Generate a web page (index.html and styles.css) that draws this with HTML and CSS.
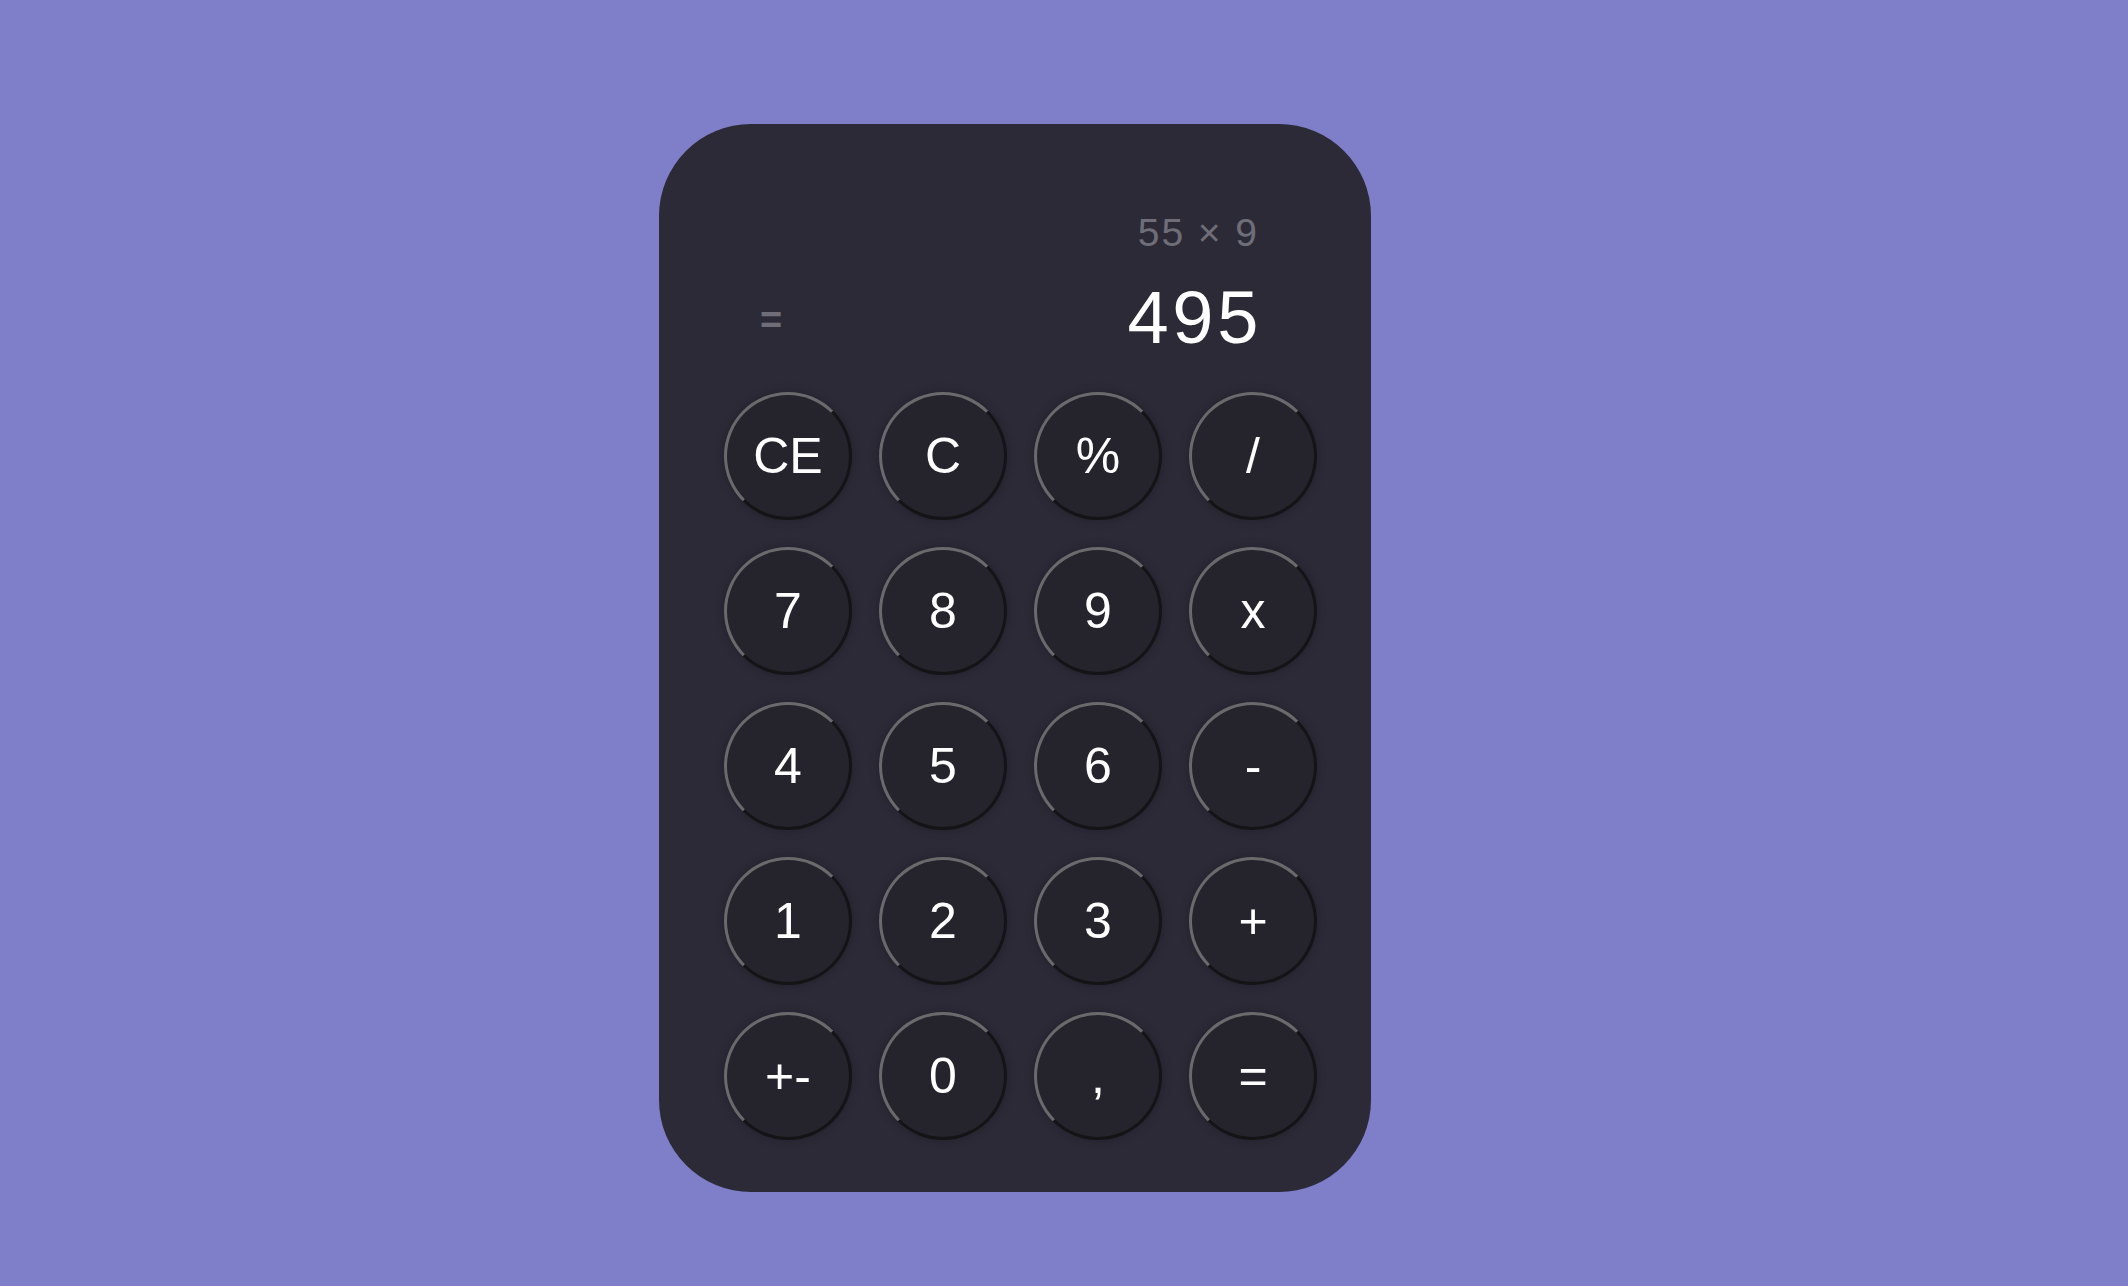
FILE: index.html
```html
<!DOCTYPE html>
<html lang="en">
<head>
<meta charset="utf-8">
<title>Calculator</title>
<link rel="stylesheet" href="styles.css">
</head>
<body>
<div class="calc">
  <div class="display">
    <div class="expr">55 × 9</div>
    <div class="result-row">
      <span class="eq">=</span>
      <span class="result">495</span>
    </div>
  </div>
  <div class="keys">
    <button class="key">CE</button>
    <button class="key">C</button>
    <button class="key">%</button>
    <button class="key">/</button>
    <button class="key">7</button>
    <button class="key">8</button>
    <button class="key">9</button>
    <button class="key">x</button>
    <button class="key">4</button>
    <button class="key">5</button>
    <button class="key">6</button>
    <button class="key">-</button>
    <button class="key">1</button>
    <button class="key">2</button>
    <button class="key">3</button>
    <button class="key">+</button>
    <button class="key">+-</button>
    <button class="key">0</button>
    <button class="key">,</button>
    <button class="key">=</button>
  </div>
</div>
</body>
</html>
```
FILE: styles.css
```css
html, body {
  margin: 0;
  padding: 0;
}
body {
  background: #7f7fc9;
  min-height: 100vh;
  font-family: "Liberation Sans", Arial, sans-serif;
  overflow: hidden;
}
.calc {
  box-sizing: border-box;
  width: 712px;
  height: 1068px;
  margin: 124px 0 0 659px;
  padding: 0 54px 0 65px;
  background: #2c2a37;
  border-radius: 92px;
}
.display {
  height: 268px;
  box-sizing: border-box;
  padding-top: 89px;
}
.expr {
  font-size: 39px;
  line-height: 39px;
  letter-spacing: 0.05em;
  color: #6f6e78;
  text-align: right;
  padding-right: 58px;
}
.result-row {
  margin-top: 29px;
  display: flex;
  justify-content: space-between;
  align-items: center;
  padding: 0 55px 0 36px;
}
.eq {
  font-size: 38px;
  line-height: 38px;
  font-weight: bold;
  color: #6f6e78;
  margin-top: 4px;
}
.result {
  font-size: 74px;
  line-height: 74px;
  letter-spacing: 0.05em;
  color: #ffffff;
}
.keys {
  display: grid;
  grid-template-columns: repeat(4, 128px);
  grid-auto-rows: 128px;
  gap: 27px;
}
.key {
  box-sizing: border-box;
  width: 128px;
  height: 128px;
  margin: 0;
  padding: 0;
  border-radius: 50%;
  border: 3px solid;
  border-color: #6a6a6c #141416 #141416 #6a6a6c;
  background: #25242d;
  color: #ffffff;
  font-family: "Liberation Sans", Arial, sans-serif;
  font-size: 50px;
  line-height: 1;
  display: flex;
  align-items: center;
  justify-content: center;
  box-shadow: 0 0 10px rgba(0, 0, 0, 0.25);
  cursor: pointer;
}
```
